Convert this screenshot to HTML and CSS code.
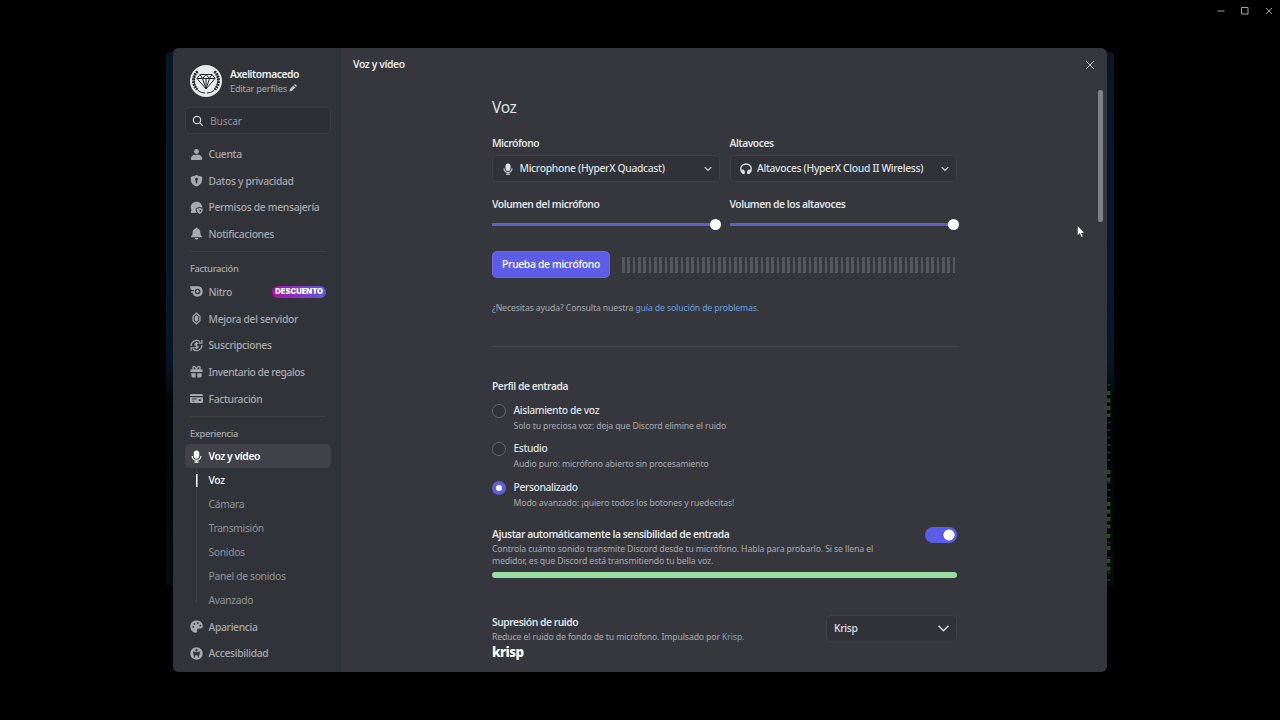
FILE: index.html
```html
<!DOCTYPE html>
<html lang="es">
  <head>
    <meta charset="UTF-8" />
    <meta name="viewport" content="width=device-width, initial-scale=1.0" />
    <title>Voz y vídeo</title>
    <link rel="stylesheet" href="styles.css">
  </head>
  <body>
    <div class="backdrop"></div>
    <svg class="leds" viewBox="0 0 6 200">
      <path class="dim" d="M3 0v200" />
      <path class="gap" d="M3 6v26M3 82v14M3 114v26M3 148v6M3 161v6M3 174v12" />
      <path class="green" d="M2 7v26M2 86v12M2 118v26M2 150v6M2 162v6M2 175v12" />
    </svg>
    <div class="window-controls">
      <svg width="8" height="8" viewBox="0 0 8 8"><path d="M.5 4h7" /></svg>
      <svg width="8" height="8" viewBox="0 0 8 8"><path d="M.5 .5h6.500v6.500H.5z" /></svg>
      <svg width="8" height="8" viewBox="0 0 8 8"><path d="M1 1l6 6M7 1L1 7" /></svg>
    </div>

    <div class="modal">
      <nav class="sidebar">
        <div class="user">
          <svg class="avatar" viewBox="0 0 32 32">
            <circle cx="16" cy="16" r="16" fill="#e8e9ea" />
            <g fill="none" stroke="#26282b" stroke-width="1" stroke-linejoin="round">
              <path d="M10 9.500h12l3 4L16 24 7 13.500zM7 13.500h18M10 9.500l2.500 4L16 24l3.500-10.500 2.500-4M12.500 13.500l3.500-4 3.500 4M16 13.500V24" />
              <path d="M7.500 6.500C2.500 11 2 19 7 24.500M24.500 6.500c5 4.500 5.500 12.500.5 18" stroke-width="3" stroke-dasharray="1.700 1" />
              <path d="M7.500 6.500C2.500 11 3 20 8 25.500q3 2.500 7 2.500M24.500 6.500c5 4.500 4.500 13.500-.5 19q-3 2.500-7 2.500" />
            </g>
          </svg>
          <div>
            <div class="user-name">Axelitomacedo</div>
            <div class="user-edit">Editar perfiles
              <svg width="8" height="8" viewBox="0 0 8 8"><path d="M.4 7.600l.5-2.500 3.500-3.500 2 2-3.500 3.500zM5 1l.5-.5q.6-.5 1.200 0l.8.800q.5.600 0 1.200l-.5.500z" /></svg>
            </div>
          </div>
        </div>
        <div class="search">
          <svg width="12" height="12" viewBox="0 0 12 12"><circle cx="5" cy="5" r="3.700" /><path d="M7.800 7.800l3 3" /></svg>
          <span>Buscar</span>
        </div>

        <div class="item"><svg viewBox="0 0 24 24"><circle cx="12" cy="6.500" r="4.500" /><path d="M1.500 20.500c0-5 3.500-8 7-8h7c3.500 0 7 3 7 8q0 1.500-1.500 1.500H3q-1.500 0-1.500-1.500z" /></svg><span>Cuenta</span></div>
        <div class="item"><svg viewBox="0 0 24 24"><path fill-rule="evenodd" d="M12 1.500l2 1.300q3 1.500 6 1.300 2.500.2 2.500 2.500V11c0 6-4.500 10-10.500 12C6 21 1.500 17 1.500 11V6.600q0-2.300 2.500-2.500 3 .2 6-1.300zM12 7a2.800 2.800 0 0 0-1.400 5.200V17h2.800v-4.800A2.800 2.800 0 0 0 12 7z" /></svg><span>Datos y privacidad</span></div>
        <div class="item"><svg viewBox="0 0 24 24"><path d="M12 1.500A10.500 10 0 0 0 2.500 16q.3 1-.8 3.500Q1 22 3 22h9.500c-2-3-2.500-7-1-9 3-.5 4-1.500 5.500-2.500l5.500 2C23 6 18 1.500 12 1.500z" /><path fill-rule="evenodd" d="M18 12.500q2.500 2 5.500 2c.5 5-1.500 7.500-5.500 9.500-4-2-6-4.500-5.500-9.500q3 0 5.500-2zm0 3v5.500q3-2 2.800-4.300-1.500-.2-2.800-1.200z" /></svg><span>Permisos de mensajería</span></div>
        <div class="item"><svg viewBox="0 0 24 24"><path d="M12 1q1.500 0 1.500 1.800C17 3.500 19 6 19 9.500c0 4 1 5 2.500 7 1 1.500.5 2.500-1 2.500h-17c-1.500 0-2-1-1-2.500C4 14.500 5 13.500 5 9.500 5 6 7 3.500 10.500 2.800Q10.500 1 12 1zM8.500 20.500h7q-1 3-3.500 3t-3.500-3z" /></svg><span>Notificaciones</span></div>

        <div class="divider"></div>
        <div class="group-title">Facturación</div>
        <div class="item"><svg viewBox="0 0 24 24"><path fill-rule="evenodd" d="M14 2.500a9.500 9.500 0 1 1-9.300 12H3a1.500 1.500 0 0 1 0-3h3.500q.3-1.500 1.300-2.500H3Q1.500 9 1.200 7.500L0 2.500zm0 4.300a5.200 5.200 0 1 0 0 10.400 5.200 5.200 0 0 0 0-10.400z" /><path d="M14 8.500l3.200 3.500-3.200 3.500-3.200-3.500z" /></svg><span>Nitro</span><b class="tag">DESCUENTO</b></div>
        <div class="item"><svg viewBox="0 0 24 24"><path fill-rule="evenodd" d="M12 .5l7.500 7v9L12 23.500l-7.500-7v-9zm0 3L6.800 8.500v7l5.200 5 5.200-5v-7z" /><path d="M12 6l3.200 3v6L12 18l-3.200-3V9z" /></svg><span>Mejora del servidor</span></div>
        <div class="item"><svg class="line" viewBox="0 0 24 24"><path d="M2 13A10 10 0 0 1 18.500 5M22 2v5.500h-6M22 11A10 10 0 0 1 5.500 19M2 22v-5.500h6" /><path d="M15 9q-.5-1.500-3-1.500T9 9.700q0 1.800 3 2.300t3 2.400q0 2.100-3 2.100t-3-1.800M12 5.500v13" /></svg><span>Suscripciones</span></div>
        <div class="item"><svg viewBox="0 0 24 24"><path d="M2.500 8h19Q23 8 23 9.500V13H1V9.500Q1 8 2.500 8zM2.500 15h8v8H5q-2.500 0-2.500-2.500zM13.500 15h8v5.500Q21.500 23 19 23h-5.500z" /><path class="stroke" d="M12 8.500C11 4 8.500 2 6.500 3S5 7.500 7.500 8M12 8.500C13 4 15.500 2 17.500 3s1.500 4.500-1 5" /></svg><span class="tight">Inventario de regalos</span></div>
        <div class="item"><svg viewBox="0 0 24 24"><path d="M2.500 3.500h19Q24 3.500 24 6v1.500H0V6q0-2.500 2.500-2.500z" /><path fill-rule="evenodd" d="M0 9.500h24V18q0 2.500-2.500 2.500h-19Q0 20.500 0 18zM4 12v2h8v-2zm0 4v1.500h4V16zm12-2.500v3h4v-3z" /></svg><span>Facturación</span></div>

        <div class="divider"></div>
        <div class="group-title">Experiencia</div>
        <div class="item active"><svg viewBox="0 0 24 24"><rect x="7" y="1" width="10" height="15" rx="5" /><path class="stroke" d="M4 11a8 8 0 0 0 16 0M12 19v4M8 22.500h8" /></svg><span>Voz y vídeo</span></div>
        <ul class="subnav">
          <li class="current">Voz</li>
          <li>Cámara</li>
          <li>Transmisión</li>
          <li>Sonidos</li>
          <li>Panel de sonidos</li>
          <li>Avanzado</li>
        </ul>
        <div class="item"><svg viewBox="0 0 24 24"><path fill-rule="evenodd" d="M12 1C5 1 .5 6 .5 12S5 23.500 10.500 23.500c3 0 3-2 2.500-4-.6-2.500.5-4 3-4h3c3 0 4.500-1.500 4.500-4C23.500 5 18.500 1 12 1zM6 11a1.700 1.700 0 1 1 0 3.400A1.700 1.700 0 0 1 6 11zM8 5.500a1.700 1.700 0 1 1 0 3.400 1.700 1.700 0 0 1 0-3.400zM14.500 4a1.700 1.700 0 1 1 0 3.400 1.700 1.700 0 0 1 0-3.400zM19 8.500a1.700 1.700 0 1 1 0 3.400 1.700 1.700 0 0 1 0-3.400z" /></svg><span>Apariencia</span></div>
        <div class="item"><svg viewBox="0 0 24 24"><circle cx="12" cy="12" r="11.500" /><g class="cutout"><circle cx="12" cy="5.800" r="1.500" /><path d="M5.500 9l4.500 1v4l-2 5.500M18.500 9L14 10v4l2 5.500M10 10h4v4h-4z" /></g></svg><span>Accesibilidad</span></div>
      </nav>

      <main class="main">
        <header class="header">
          <span>Voz y vídeo</span>
          <svg width="10" height="10" viewBox="0 0 10 10"><path d="M1 1l8 8M9 1L1 9" /></svg>
        </header>

        <div class="content">
          <h1>Voz</h1>

          <div class="devices">
            <div class="device">
              <label>Micrófono</label>
              <div class="select">
                <svg class="glyph" viewBox="0 0 24 24"><rect x="7" y="1" width="10" height="15" rx="5" /><path class="stroke" d="M4 11a8 8 0 0 0 16 0M12 19v4M8 22.500h8" /></svg>
                <span>Microphone (HyperX Quadcast)</span>
                <svg class="chevron" viewBox="0 0 8 8"><path d="M.7 2.200L4 5.500l3.300-3.300" /></svg>
              </div>
              <label class="volume">Volumen del micrófono</label>
              <div class="slider"><i></i></div>
            </div>
            <div class="device">
              <label>Altavoces</label>
              <div class="select">
                <svg class="glyph" viewBox="0 0 24 24"><path class="stroke phones" d="M3.500 18C-1.500 9 4 2 12 2s13.500 7 8.500 16" /><path d="M1.500 13.500q6-1.500 8 2.500 1.500 4-1 6.500-4.500 0-7-5zM22.500 13.500q-6-1.500-8 2.500-1.500 4 1 6.500 4.500 0 7-5z" /></svg>
                <span>Altavoces (HyperX Cloud II Wireless)</span>
                <svg class="chevron" viewBox="0 0 8 8"><path d="M.7 2.200L4 5.500l3.300-3.300" /></svg>
              </div>
              <label class="volume">Volumen de los altavoces</label>
              <div class="slider"><i></i></div>
            </div>
          </div>

          <div class="mic-test">
            <button>Prueba de micrófono</button>
            <div class="meter"></div>
          </div>
          <p class="help">¿Necesitas ayuda? Consulta nuestra <a>guía de solución de problemas.</a></p>

          <h2>Perfil de entrada</h2>
          <div class="radio">
            <i></i>
            <div><strong>Aislamiento de voz</strong><p>Solo tu preciosa voz: deja que Discord elimine el ruido</p></div>
          </div>
          <div class="radio">
            <i></i>
            <div><strong>Estudio</strong><p>Audio puro: micrófono abierto sin procesamiento</p></div>
          </div>
          <div class="radio checked">
            <i></i>
            <div><strong>Personalizado</strong><p>Modo avanzado: ¡quiero todos los botones y ruedecitas!</p></div>
          </div>

          <div class="setting">
            <div>
              <h2>Ajustar automáticamente la sensibilidad de entrada</h2>
              <p>Controla cuánto sonido transmite Discord desde tu micrófono. Habla para probarlo. Si se llena el<br>medidor, es que Discord está transmitiendo tu bella voz.</p>
            </div>
            <div class="toggle"></div>
          </div>
          <div class="level"></div>

          <div class="setting noise">
            <div>
              <h2>Supresión de ruido</h2>
              <p>Reduce el ruido de fondo de tu micrófono. Impulsado por <a>Krisp.</a></p>
              <div class="krisp">krisp</div>
            </div>
            <div class="select small">
              <span>Krisp</span>
              <svg class="chevron" viewBox="0 0 8 8"><path d="M.4 2L4 5.600 7.600 2" /></svg>
            </div>
          </div>
        </div>
        <div class="scrollbar"></div>
      </main>
    </div>

    <svg class="cursor" viewBox="0 0 8 13"><path d="M.5.500v10l2.300-2 1.600 3.700 1.600-.7-1.600-3.500h3z" /></svg>
  </body>
</html>
```
FILE: styles.css
```css
* {
  box-sizing: border-box;
}
body {
  margin: 0;
  height: 720px;
  padding-top: 48px;
  overflow: hidden;
  position: relative;
  background: #000;
  color: #dfe0e3;
  font-family: "Noto Sans", "Open Sans", sans-serif;
  font-size: 10.3px;
  letter-spacing: -0.31px;
  white-space: nowrap;
}
h1, h2, p, ul {
  margin: 0;
  padding: 0;
}
svg {
  flex: none;
}

/* app window showing behind the modal */
.backdrop {
  position: absolute;
  left: 166px;
  top: 52px;
  width: 948px;
  height: 534px;
  border-radius: 4px;
  background: linear-gradient(#081726 0%, #07192a 45%, #081524 58%, #020407 66%, #060a0b 100%);
}
.leds {
  position: absolute;
  left: 1106px;
  top: 384px;
  width: 6px;
  height: 200px;
  fill: none;
}
.leds .dim {
  stroke: #20282c;
  stroke-width: 3;
  stroke-dasharray: 2 5.500;
}
.leds .gap {
  stroke: #04080a;
  stroke-width: 6;
}
.leds .green {
  stroke: #1d4f1b;
  stroke-width: 5;
  stroke-dasharray: 4 3.500;
}
.window-controls {
  position: absolute;
  top: 7px;
  right: 7px;
  display: flex;
  gap: 16px;
  fill: none;
  stroke: #a0a0a0;
}
.modal {
  position: relative;
  display: flex;
  width: 933.5px;
  height: 624px;
  margin-left: 173px;
  border-radius: 6px;
  overflow: hidden;
  background: #35373d;
}

/* sidebar */
.sidebar {
  width: 168px;
  padding: 16px 10px 0 12px;
  background: #303338;
  color: #a7a9ae;
}
.user {
  display: flex;
  align-items: center;
  gap: 8px;
  height: 33px;
  padding-left: 5px;
}
.avatar {
  width: 32px;
  height: 32px;
}
.user-name {
  padding-top: 1px;
  color: #eeeff1;
  font-weight: 600;
  line-height: 15px;
  letter-spacing: -0.45px;
}
.user-edit {
  font-size: 9.3px;
  line-height: 14px;
  letter-spacing: -0.25px;
}
.user-edit svg {
  fill: #c0c2c6;
}
.search {
  display: flex;
  align-items: center;
  gap: 6px;
  width: 146px;
  height: 27px;
  margin: 10px 0 6.7px;
  padding-left: 6px;
  border: 1px solid #3b3d43;
  border-radius: 5px;
  background: #2d2f34;
  color: #92949a;
  letter-spacing: -0.2px;
}
.search svg {
  fill: none;
  stroke: #d5d6d9;
  stroke-width: 1.2;
}
.item {
  display: flex;
  align-items: center;
  gap: 5.5px;
  width: 146px;
  height: 26.67px;
  padding: 0 5px;
  font-weight: 500;
}
.item svg {
  width: 13px;
  height: 13px;
  fill: currentColor;
}
.stroke,
.item svg.line {
  fill: none;
  stroke: currentColor;
  stroke-width: 2.2;
}
.tight {
  letter-spacing: -0.43px;
}
.cutout {
  fill: #303338;
  stroke: #303338;
  stroke-width: 1.6;
}
.tag {
  margin-left: auto;
  height: 12px;
  padding: 0 3px;
  border-radius: 6px;
  background: linear-gradient(90deg, #b10da7, #5b5bdc);
  color: #fff;
  font: 900 7.6px/12px Inter, sans-serif;
  letter-spacing: 0;
}
.divider {
  height: 1px;
  margin: 4px 5px 9px;
  background: #3b3e43;
}
.group-title {
  height: 17.3px;
  padding-left: 5px;
  font-size: 9.3px;
  line-height: 16px;
  font-weight: 500;
}
.item.active {
  height: 24px;
  margin-top: 1px;
  border-radius: 5px;
  background: #404247;
  color: #fff;
  font-weight: 600;
  letter-spacing: -0.4px;
}
.subnav {
  margin-left: 11px;
  margin-bottom: 1px;
  list-style: none;
  background: linear-gradient(#3c3f44, #3c3f44) 0 0 / 1px 135px no-repeat;
}
.subnav li {
  height: 24px;
  padding-left: 12.5px;
  line-height: 24px;
  color: #92949a;
}
.subnav .current {
  color: #fff;
  font-weight: 500;
  background: linear-gradient(#fff, #fff) 0 6px / 1.5px 13px no-repeat;
}

/* main panel */
.main {
  position: relative;
  flex: 1;
}
.header {
  display: flex;
  align-items: center;
  justify-content: space-between;
  height: 33px;
  padding: 0 12px;
  color: #e6e7e9;
  font-weight: 600;
  letter-spacing: -0.38px;
}
.header span {
  padding-bottom: 1px;
}
.header svg {
  fill: none;
  stroke: #c4c6ca;
}
.content {
  width: 465px;
  margin-left: 151px;
}
h1 {
  padding-top: 14px;
  font-size: 15.5px;
  font-weight: 400;
  line-height: 24px;
}
h2,
label {
  display: block;
  font-size: 10.3px;
  font-weight: 600;
  line-height: 14px;
  letter-spacing: -0.46px;
}
.devices {
  display: flex;
  gap: 10px;
  margin-top: 17px;
}
.device {
  width: 227.5px;
}
.select {
  display: flex;
  align-items: center;
  height: 27px;
  margin-top: 5px;
  padding: 0 7px 0 9px;
  border: 1px solid #3e4046;
  border-radius: 5px;
  background: #303237;
  font-weight: 500;
}
.select span {
  padding-bottom: 1px;
}
.glyph {
  width: 12px;
  height: 12px;
  margin-right: 5.5px;
  fill: currentColor;
}
.phones {
  stroke-width: 2.6;
}
.chevron {
  width: 8px;
  height: 8px;
  margin-left: auto;
  fill: none;
  stroke: #d8d9dc;
  stroke-width: 1.1;
}
.volume {
  margin-top: 15px;
}
.slider {
  display: flex;
  align-items: center;
  justify-content: flex-end;
  height: 11px;
  margin-top: 8px;
  background: linear-gradient(#605fc8, #605fc8) 0 50% / 224px 3px no-repeat;
}
.slider i {
  width: 11px;
  height: 11px;
  margin-right: -1.5px;
  border-radius: 50%;
  background: #fff;
}
.mic-test {
  display: flex;
  align-items: center;
  gap: 12px;
  margin-top: 21px;
}
button {
  width: 118px;
  height: 27px;
  padding: 0 0 1px;
  border: 1px solid #6b6bea;
  border-radius: 5px;
  background: #5b5de8;
  color: #fff;
  font: inherit;
  font-weight: 500;
  letter-spacing: inherit;
}
.meter {
  width: 334px;
  height: 16px;
  background: repeating-linear-gradient(90deg, #56585e 0 2.67px, transparent 2.67px 5.333px);
}
p {
  color: #a8aaaf;
  font-size: 8.7px;
  line-height: 12px;
  letter-spacing: -0.125px;
}
a {
  color: #6d9fd8;
}
.help {
  height: 45px;
  margin-top: 24px;
  margin-bottom: 32px;
  border-bottom: 1px solid #42444a;
}
.radio {
  display: flex;
  gap: 7.5px;
  margin-top: 10.5px;
  height: 28px;
}
.radio:first-of-type {
  margin-top: 10px;
}
.radio i {
  width: 14px;
  height: 14px;
  border: 1px solid #66686e;
  border-radius: 50%;
  background: #303237;
}
.radio.checked i {
  border: 4.5px solid #5f5fdb;
  background: #fff;
}
.radio strong {
  display: block;
  margin-top: -1px;
  font-weight: 500;
  line-height: 14px;
  letter-spacing: -0.38px;
}
.radio p {
  margin-top: 3px;
}
.setting {
  display: flex;
  justify-content: space-between;
  margin-top: 18px;
}
.setting p {
  margin-top: 2.5px;
}
.toggle {
  width: 32px;
  height: 16px;
  border-radius: 8px;
  background: radial-gradient(circle at 24px 8px, #fff 5.3px, #5b5de8 5.8px);
}
.level {
  height: 6px;
  margin-top: 4.5px;
  border-radius: 3px;
  background: #97dda0;
}
.noise {
  margin-top: 37px;
}
.krisp {
  color: #fff;
  font-size: 13.5px;
  font-weight: 800;
  line-height: 18px;
  letter-spacing: -0.6px;
}
.select.small {
  width: 131px;
  margin-top: 0;
  padding-left: 7px;
}
.small .chevron {
  width: 11px;
  height: 11px;
}
.scrollbar {
  position: absolute;
  top: 42px;
  right: 3.5px;
  width: 5px;
  height: 132px;
  border-radius: 3px;
  background: #808186;
}
.cursor {
  position: absolute;
  left: 1077px;
  top: 225px;
  width: 8px;
  height: 13px;
  fill: #fff;
  stroke: #222;
  stroke-width: .4;
}
```
